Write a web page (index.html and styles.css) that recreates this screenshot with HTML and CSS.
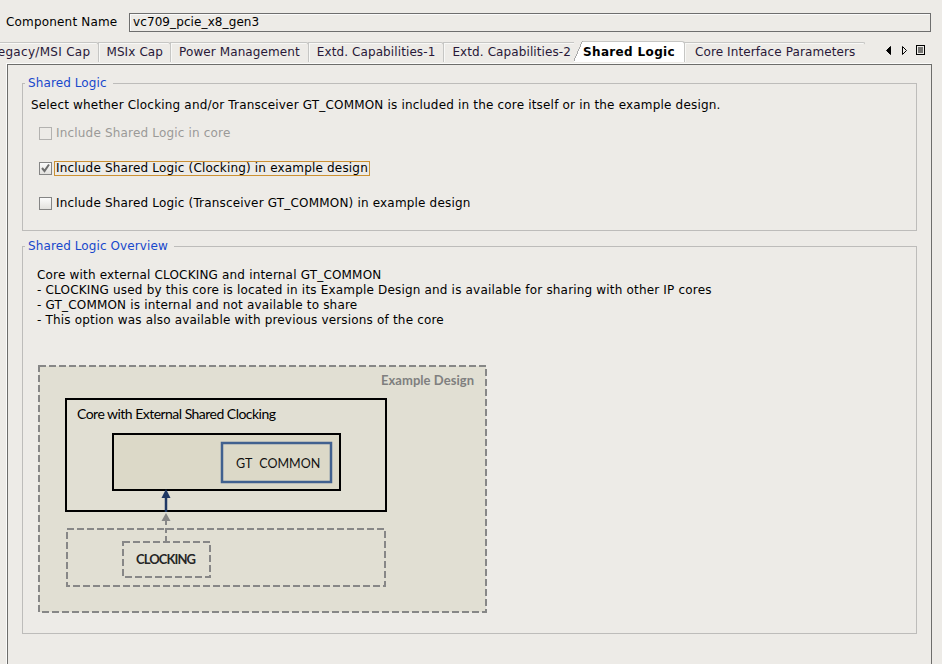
FILE: index.html
```html
<!DOCTYPE html>
<html>
<head>
<meta charset="utf-8">
<link rel="stylesheet" href="styles.css">
</head>
<body>
<div class="top">
  <span class="name-label">Component Name</span>
  <div class="name-field">vc709_pcie_x8_gen3</div>
</div>
<div class="tabbar">
  <div class="tabs">
    <div class="tab first">Legacy/MSI Cap</div>
    <div class="tab narrow">MSIx Cap</div>
    <div class="tab">Power Management</div>
    <div class="tab">Extd. Capabilities-1</div>
    <div class="tab before-active">Extd. Capabilities-2</div>
    <div class="tab active">Shared Logic</div>
    <div class="tab wide">Core Interface Parameters</div>
  </div>
  <div class="tab-nav">
    <svg width="42" height="12" viewBox="0 0 42 12">
      <polygon points="5.5,1.5 1.5,5.5 5.5,9.5" fill="#000" stroke="#000" stroke-width="1"/>
      <polygon points="17.5,1.5 21.5,5.5 17.5,9.5" fill="none" stroke="#000" stroke-width="1"/>
      <rect x="31.5" y="0.5" width="8" height="9" fill="none" stroke="#000"/>
      <line x1="33" y1="3" x2="38" y2="3" stroke="#000"/>
      <line x1="33" y1="5" x2="38" y2="5" stroke="#000"/>
      <line x1="33" y1="7" x2="38" y2="7" stroke="#000"/>
    </svg>
  </div>
</div>
<div class="panel">
  <fieldset class="group g1">
    <legend>Shared Logic</legend>
    <div class="g1-body">
      <p class="intro">Select whether Clocking and/or Transceiver GT_COMMON is included in the core itself or in the example design.</p>
      <div class="opts">
        <div class="opt disabled"><span class="cb"></span><span class="lbl">Include Shared Logic in core</span></div>
        <div class="opt"><span class="cb checked"><svg width="11" height="11" viewBox="0 0 11 11"><path d="M2 5 L4.5 8 L9 1.5" fill="none" stroke="#6e6e6e" stroke-width="2"/></svg></span><span class="lbl focus">Include Shared Logic (Clocking) in example design</span></div>
        <div class="opt"><span class="cb"></span><span class="lbl">Include Shared Logic (Transceiver GT_COMMON) in example design</span></div>
      </div>
    </div>
  </fieldset>
  <fieldset class="group g2">
    <legend>Shared Logic Overview</legend>
    <div class="g2-body">
      <div class="overview">
        <div>Core with external CLOCKING and internal GT_COMMON</div>
        <div>- CLOCKING used by this core is located in its Example Design and is available for sharing with other IP cores</div>
        <div>- GT_COMMON is internal and not available to share</div>
        <div>- This option was also available with previous versions of the core</div>
      </div>
      <svg class="diagram" width="452" height="250" viewBox="0 0 452 250">
        <rect x="2" y="2" width="447" height="246" fill="#e1dfd3" stroke="#878787" stroke-width="2" stroke-dasharray="7 3"/>
        <text x="437" y="21" text-anchor="end" class="d-ex" textLength="93">Example Design</text>
        <rect x="29" y="35" width="320" height="112" fill="#e1dfd3" stroke="#000" stroke-width="2"/>
        <text x="40" y="55" class="d-txt" textLength="199">Core with External Shared Clocking</text>
        <rect x="76" y="70" width="227" height="56" fill="#dcd9c8" stroke="#000" stroke-width="2"/>
        <rect x="185" y="79" width="109" height="39" fill="#dcd9c8" stroke="#41618f" stroke-width="2.5"/>
        <text x="199" y="104" class="d-gt">GT COMMON</text>
        <line x1="129" y1="132" x2="129" y2="148" stroke="#1f3864" stroke-width="2.5"/>
        <polygon points="129,125 124.5,134 133.5,134" fill="#1f3864"/>
        <line x1="129" y1="156" x2="129" y2="178" stroke="#878787" stroke-width="2" stroke-dasharray="5 3"/>
        <polygon points="129,149 124.5,157 133.5,157" fill="#878787"/>
        <rect x="30" y="165" width="318" height="57" fill="none" stroke="#878787" stroke-width="2" stroke-dasharray="7 3"/>
        <rect x="86" y="178" width="87" height="35" fill="#e1dfd3" stroke="#878787" stroke-width="2" stroke-dasharray="7 3"/>
        <text x="99" y="200" class="d-clk" textLength="60">CLOCKING</text>
      </svg>
    </div>
  </fieldset>
</div>
</body>
</html>
```
FILE: styles.css
```css
html, body {
  margin: 0;
  padding: 0;
  background: #edebe7;
  overflow: hidden;
  height: 664px;
}
body {
  font-family: "DejaVu Sans", sans-serif;
  font-size: 12px;
  letter-spacing: 0.18px;
  color: #000;
}
.top {
  display: flex;
  align-items: center;
  padding: 13px 11px 0 6px;
}
.name-label {
  width: 123px;
  flex: none;
  line-height: 19px;
}
.name-field {
  flex: 1;
  height: 19px;
  box-sizing: border-box;
  border: 1px solid #6e6e6e;
  box-shadow: inset 1px 1px 0 #fafafa;
  padding: 0 3px;
  line-height: 17px;
  letter-spacing: 0.1px;
}
.tabbar {
  display: flex;
  align-items: flex-end;
  margin-top: 9px;
  height: 21px;
}
.tabs {
  display: flex;
  align-items: flex-end;
  overflow: hidden;
  height: 21px;
}
.tab {
  flex: none;
  box-sizing: border-box;
  height: 20px;
  line-height: 19px;
  padding: 0 8px;
  letter-spacing: 0.1px;
  border: 1px solid #c6c6c4;
  border-bottom: none;
  border-radius: 0 3px 0 0;
  margin-right: -1px;
  color: #281838;
  background: #edebe7;
  box-shadow: inset 1px 1px 0 #f8f8f6;
}
.tab.first {
  margin-left: -18px;
  letter-spacing: 0.3px;
}
.tab.narrow {
  padding: 0 7px;
}
.tab.wide {
  padding: 0 10px;
}
.tab.before-active {
  border-right: none;
  border-radius: 0;
  padding-right: 4px;
}
.tab.active {
  position: relative;
  height: 21px;
  line-height: 20px;
  background: #fff;
  font-weight: bold;
  color: #000;
  border-left: none;
  padding-left: 9px;
  padding-right: 9px;
  letter-spacing: 0.35px;
  box-shadow: none;
}
.tab.active::before {
  content: "";
  position: absolute;
  left: 0;
  top: -1px;
  width: 9px;
  height: 21px;
  background: linear-gradient(to bottom right, #edebe7 calc(50% - 1px), #a9a9a9 calc(50% - 1px), #a9a9a9 50%, #fff 50%);
}
.tab-nav {
  margin-left: auto;
  margin-right: 15px;
  height: 21px;
  display: flex;
  align-items: center;
}
.tab-nav svg {
  display: block;
  margin-top: -1px;
}
.panel {
  margin: 2px 0 0 7px;
  width: 925px;
  height: 700px;
  box-sizing: border-box;
  border: 1px solid #6d6d6b;
  box-shadow: -1px -1px 0 #fbfbfa;
  padding: 11px 14px 0 14px;
}
.group {
  margin: 0;
  padding: 0;
  border: 1px solid #bdbcba;
  min-inline-size: 0;
}
.group legend {
  padding: 0 6px 0 3px;
  margin-left: 2px;
  line-height: 15px;
  letter-spacing: 0.1px;
  color: #1848cc;
}
.g1-body {
  padding: 7px 8px 17px 8px;
}
.intro {
  margin: 0;
  line-height: 15px;
}
.opts {
  display: flex;
  flex-direction: column;
  gap: 16px;
  margin-top: 11px;
  margin-left: 8px;
}
.opt {
  display: flex;
  align-items: center;
  height: 19px;
}
.cb {
  width: 13px;
  height: 13px;
  box-sizing: border-box;
  border: 1px solid #858585;
  background: linear-gradient(#fbfbfb, #e2e1de);
  margin-right: 2px;
  display: flex;
  align-items: center;
  justify-content: center;
}
.cb svg {
  display: block;
}
.opt.disabled .cb {
  border-color: #b3b2b0;
  background: #edebe7;
}
.opt.disabled .lbl {
  color: #9b9a98;
}
.lbl {
  border: 1px solid transparent;
  padding: 0 1px;
  line-height: 13px;
}
.lbl.focus {
  border-color: #cc9133;
}
.group.g2 {
  margin-top: 8px;
}
.g2-body {
  padding: 14px 14px 19px 14px;
}
.overview {
  line-height: 15px;
}
.diagram {
  display: block;
  margin-top: 36px;
  letter-spacing: 0;
}
.d-txt {
  font-family: Lato, "Liberation Sans", sans-serif;
  font-size: 14px;
  fill: #000;
}
.d-gt {
  font-family: Lato, "Liberation Sans", sans-serif;
  font-size: 12.5px;
  word-spacing: 4px;
  fill: #111;
}
.d-ex {
  font-family: Lato, "Liberation Sans", sans-serif;
  font-size: 13px;
  font-weight: bold;
  fill: #7f7f7f;
}
.d-clk {
  font-family: Lato, "Liberation Sans", sans-serif;
  font-size: 13px;
  font-weight: bold;
  fill: #262626;
}
```
